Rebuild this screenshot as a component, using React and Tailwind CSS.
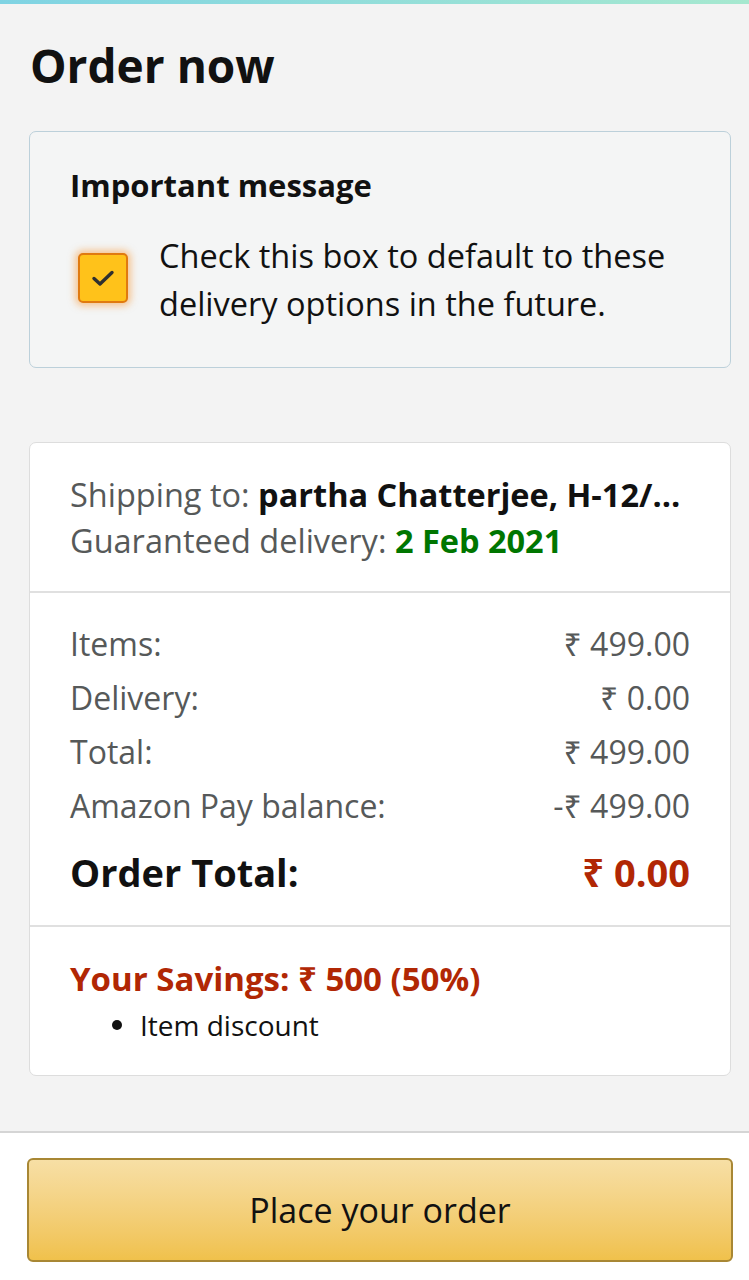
export default function App() {
  const font = { fontFamily: "'Open Sans', 'Noto Sans', sans-serif" };
  return (
    <div className="w-[749px] h-[1280px] bg-[#f3f3f3] flex flex-col overflow-hidden" style={font}>
      <div className="h-[4px] bg-gradient-to-r from-[#7fd3e3] to-[#a6e8cf]" />
      <div className="flex-1 flex flex-col pl-[29px] pr-[18px]">
        <h1 className="mt-[33px] text-[46px] leading-[56px] font-bold text-[#111] pl-[1px]">Order now</h1>
        <div className="mt-[38px] rounded-[7px] border-[1.5px] border-[#bcd0da] bg-[#f4f5f5] pl-[40px] pr-[30px] pt-[34px] pb-[39px]">
          <div className="text-[31px] leading-[38px] font-bold text-[#111]">Important message</div>
          <div className="mt-[28px] flex items-start">
            <div className="ml-[8px] mt-[21px] w-[50px] h-[50px] shrink-0 rounded-[5px] bg-[#ffc21a] border-2 border-[#e07a10] shadow-[0_0_7px_3px_rgba(247,150,50,0.5)] flex items-center justify-center">
              <svg width="26" height="20" viewBox="0 0 26 20" fill="none">
                <path d="M4 10.5 L10 16 L22 4.5" stroke="#2f2f2f" strokeWidth="3.4" strokeLinecap="round" strokeLinejoin="round" />
              </svg>
            </div>
            <div className="ml-[31px] text-[32.5px] leading-[48px] text-[#111]">
              Check this box to default to these delivery options in the future.
            </div>
          </div>
        </div>

        <div className="mt-[74px] rounded-[7px] border-[1.5px] border-[#dddddd] bg-white">
          <div className="px-[40px] pt-[29px] pb-[27px] text-[32.5px] leading-[46px] text-[#565959]">
            <div className="whitespace-nowrap">
              Shipping to: <span className="font-bold text-[#111]">partha Chatterjee, H-12/…</span>
            </div>
            <div>
              Guaranteed delivery: <span className="font-bold text-[#007600]">2 Feb 2021</span>
            </div>
          </div>
          <div className="h-[2px] bg-[#e0e0e0]" />
          <div className="px-[40px] pt-[24px] pb-[20px] text-[32px] text-[#565959]">
            <div className="flex justify-between leading-[54px]"><span>Items:</span><span>₹ 499.00</span></div>
            <div className="flex justify-between leading-[54px]"><span>Delivery:</span><span>₹ 0.00</span></div>
            <div className="flex justify-between leading-[54px]"><span>Total:</span><span>₹ 499.00</span></div>
            <div className="flex justify-between leading-[54px]"><span>Amazon Pay balance:</span><span>-₹ 499.00</span></div>
            <div className="flex justify-between mt-[6px] leading-[66px] text-[38px] font-bold">
              <span className="text-[#111]">Order Total:</span>
              <span className="text-[#b12704]">₹ 0.00</span>
            </div>
          </div>
          <div className="h-[2px] bg-[#e0e0e0]" />
          <div className="px-[40px] pt-[29px] pb-[27px]">
            <div className="text-[33px] leading-[46px] font-bold text-[#b12704]">Your Savings: ₹ 500 (50%)</div>
            <div className="flex items-center text-[28px] leading-[46px] text-[#111] pl-[42px]">
              <span className="w-[10px] h-[10px] rounded-full bg-[#111] mr-[18px]" />
              Item discount
            </div>
          </div>
        </div>
      </div>
      <div className="h-[149px] bg-white border-t-2 border-[#d5d5d5] pl-[27px] pr-[16px] pt-[25px]">
        <button className="w-full h-[104px] rounded-[6px] border-2 border-[#a88734] bg-gradient-to-b from-[#f7dfa5] to-[#f0c14b] text-[34px] text-[#111]">
          Place your order
        </button>
      </div>
    </div>
  );
}
